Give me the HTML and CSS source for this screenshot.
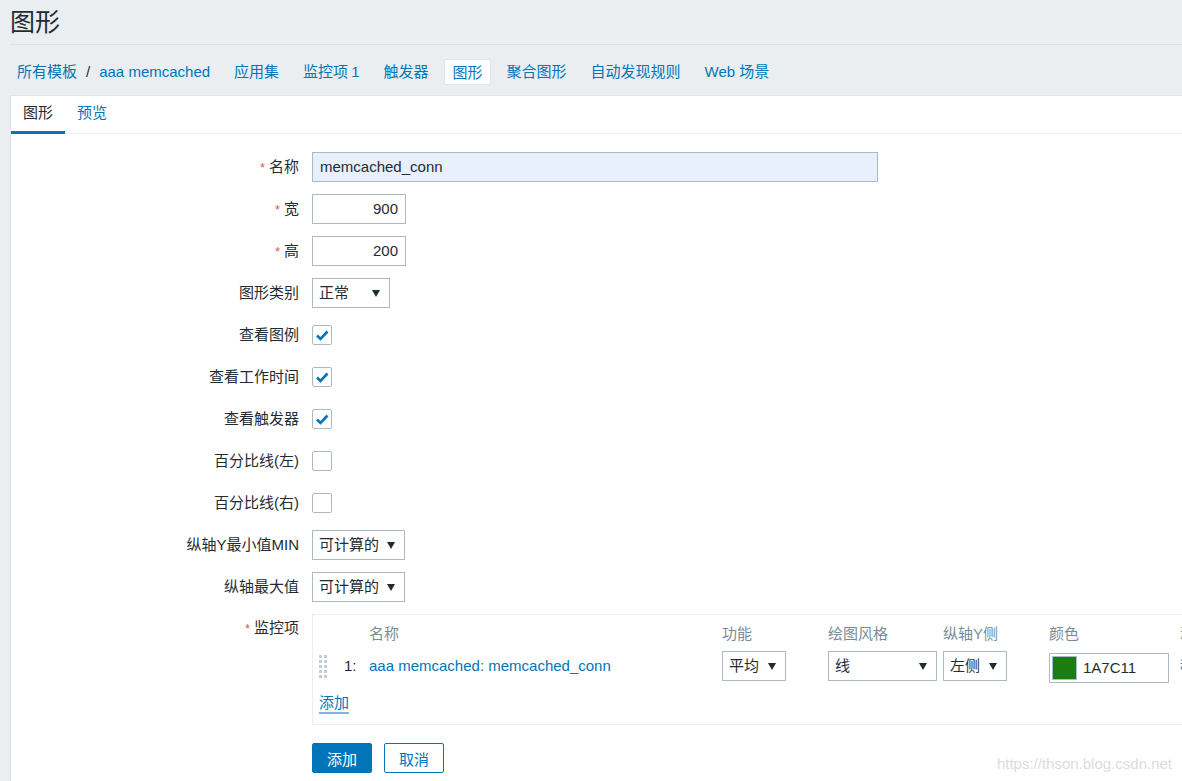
FILE: index.html
```html
<!DOCTYPE html>
<html lang="zh-CN">
<head>
<meta charset="utf-8">
<title>图形</title>
<link rel="stylesheet" href="styles.css">
</head>
<body>
<div class="page">
  <header class="header">
    <h1 class="title">图形</h1>
  </header>
  <nav class="nav">
    <a class="nav-link">所有模板</a>
    <span class="sep">/</span>
    <a class="nav-link">aaa memcached</a>
    <a class="nav-link gap">应用集</a>
    <a class="nav-link gap">监控项<span class="count">1</span></a>
    <a class="nav-link gap">触发器</a>
    <span class="nav-link gap selected">图形</span>
    <a class="nav-link gap">聚合图形</a>
    <a class="nav-link gap">自动发现规则</a>
    <a class="nav-link gap">Web 场景</a>
  </nav>
  <main class="panel">
    <div class="tabs">
      <span class="tab active">图形</span>
      <a class="tab">预览</a>
    </div>
    <div class="form">
      <label class="lbl"><span class="req">*</span>名称</label>
      <div class="field"><div class="input wide autofill">memcached_conn</div></div>

      <label class="lbl"><span class="req">*</span>宽</label>
      <div class="field"><div class="input num">900</div></div>

      <label class="lbl"><span class="req">*</span>高</label>
      <div class="field"><div class="input num">200</div></div>

      <label class="lbl">图形类别</label>
      <div class="field"><div class="select s-type">正常<i class="arrow"></i></div></div>

      <label class="lbl">查看图例</label>
      <div class="field"><span class="cb on"><svg viewBox="0 0 20 20" width="20" height="20"><path d="M5 10.5l3.5 3.5 7-7.5" fill="none" stroke="#0275b8" stroke-width="2.6"/></svg></span></div>

      <label class="lbl">查看工作时间</label>
      <div class="field"><span class="cb on"><svg viewBox="0 0 20 20" width="20" height="20"><path d="M5 10.5l3.5 3.5 7-7.5" fill="none" stroke="#0275b8" stroke-width="2.6"/></svg></span></div>

      <label class="lbl">查看触发器</label>
      <div class="field"><span class="cb on"><svg viewBox="0 0 20 20" width="20" height="20"><path d="M5 10.5l3.5 3.5 7-7.5" fill="none" stroke="#0275b8" stroke-width="2.6"/></svg></span></div>

      <label class="lbl">百分比线(左)</label>
      <div class="field"><span class="cb"></span></div>

      <label class="lbl">百分比线(右)</label>
      <div class="field"><span class="cb"></span></div>

      <label class="lbl">纵轴Y最小值MIN</label>
      <div class="field"><div class="select s-calc">可计算的<i class="arrow"></i></div></div>

      <label class="lbl">纵轴最大值</label>
      <div class="field"><div class="select s-calc">可计算的<i class="arrow"></i></div></div>

      <label class="lbl top"><span class="req">*</span>监控项</label>
      <div class="field">
        <div class="items">
          <div class="items-grid">
            <span></span><span></span>
            <span class="th">名称</span>
            <span class="th">功能</span>
            <span class="th">绘图风格</span>
            <span class="th">纵轴Y侧</span>
            <span class="th">颜色</span>
            <span class="th">动作</span>

            <span class="handle"><svg width="8" height="23" viewBox="0 0 8 23"><g fill="#c3ccd1"><rect x="0" y="0" width="3" height="3"/><rect x="5" y="0" width="3" height="3"/><rect x="0" y="5" width="3" height="3"/><rect x="5" y="5" width="3" height="3"/><rect x="0" y="10" width="3" height="3"/><rect x="5" y="10" width="3" height="3"/><rect x="0" y="15" width="3" height="3"/><rect x="5" y="15" width="3" height="3"/><rect x="0" y="20" width="3" height="3"/><rect x="5" y="20" width="3" height="3"/></g></svg></span>
            <span class="td">1:</span>
            <a class="td link">aaa memcached: memcached_conn</a>
            <span class="td"><div class="select s-func">平均<i class="arrow"></i></div></span>
            <span class="td"><div class="select s-style">线<i class="arrow"></i></div></span>
            <span class="td"><div class="select s-axis">左侧<i class="arrow"></i></div></span>
            <span class="td"><div class="input color"><span class="swatch"></span>1A7C11</div></span>
            <a class="td link remove">移除</a>
          </div>
          <a class="add-link">添加</a>
        </div>
      </div>

      <span></span>
      <div class="field buttons">
        <button class="btn primary">添加</button>
        <button class="btn">取消</button>
      </div>
    </div>
  </main>
  <div class="watermark">https://thson.blog.csdn.net</div>
</div>
</body>
</html>
```

FILE: styles.css
```css
* { box-sizing: border-box; }
html, body { margin: 0; padding: 0; }
body {
  background: #ebeef0;
  font-family: "Liberation Sans", "Noto Sans CJK SC", sans-serif;
  font-size: 15px;
  color: #1f2c33;
  overflow: hidden;
  width: 1182px;
  height: 781px;
}
.page {
  position: relative;
  width: 1182px;
  height: 781px;
  overflow: hidden;
}
.header {
  margin: 0 0 0 10px;
  height: 45px;
  border-bottom: 1px solid #dce2e5;
  display: flex;
  align-items: center;
}
.title {
  margin: 0;
  font-size: 25px;
  font-weight: normal;
  line-height: 30px;
  color: #1f2c33;
}
.nav {
  display: flex;
  align-items: center;
  height: 50px;
  padding-top: 3px;
  padding-left: 17px;
}
.nav-link {
  color: #0275b8;
  white-space: nowrap;
  line-height: 25px;
}
.count { margin-left: 3px; }
.nav-link.gap { margin-left: 24px; }
.sep { margin: 0 9px; color: #1f2c33; }
.nav-link.selected {
  background: #fff;
  border: 1px solid #e0e5e8;
  border-radius: 2px;
  padding: 0 7px;
  margin-left: 16px;
  margin-right: -8px;
  height: 26px;
}
.panel {
  margin-left: 10px;
  width: 1400px;
  height: 700px;
  background: #fff;
  border: 1px solid #dfe4e7;
  border-right: none;
}
.tabs {
  display: flex;
  height: 38px;
  border-bottom: 1px solid #ebeef0;
}
.tab {
  color: #0275b8;
  padding: 0 12px;
  line-height: 34px;
  height: 38px;
  border-bottom: 3px solid transparent;
}
.tab.active {
  color: #1f2c33;
  border-bottom-color: #0275b8;
}
.form {
  display: grid;
  grid-template-columns: 288px 1fr;
  column-gap: 13px;
  row-gap: 12px;
  padding-top: 18px;
}
.lbl {
  text-align: right;
  line-height: 30px;
  height: 30px;
  white-space: nowrap;
  overflow: visible;
}
.lbl.top { line-height: 28px; }
.req { color: #e45959; margin-right: 4px; font-size: 13px; line-height: 1; }
.field {
  display: flex;
  align-items: center;
  min-height: 30px;
}
.input {
  height: 30px;
  border: 1px solid #acbbc2;
  background: #fff;
  line-height: 28px;
  padding: 0 7px;
  white-space: nowrap;
}
.input.wide { width: 566px; }
.input.autofill { background: #e8f0fe; }
.input.num { width: 94px; text-align: right; }
.select {
  position: relative;
  height: 30px;
  border: 1px solid #acbbc2;
  background: #fff;
  line-height: 28px;
  padding: 0 6px;
  white-space: nowrap;
}
.arrow {
  position: absolute;
  right: 9px;
  top: 11px;
  width: 0;
  height: 0;
  border-left: 4px solid transparent;
  border-right: 4px solid transparent;
  border-top: 7px solid #1f2c33;
}
.s-type { width: 78px; }
.s-calc { width: 93px; }
.s-func { width: 64px; }
.s-style { width: 109px; }
.s-axis { width: 64px; }
.cb {
  display: inline-block;
  width: 20px;
  height: 20px;
  border: 1px solid #acbbc2;
  border-radius: 2px;
  background: #fff;
  position: relative;
}
.cb svg { position: absolute; left: -1px; top: -1px; }
.items {
  width: 1000px;
  height: 111px;
  border: 1px solid #ebeef0;
  border-right: none;
  padding: 5px 0 0 6px;
}
.items-grid {
  display: grid;
  grid-template-columns: 25px 25px 353px 106px 115px 106px 131px 80px;
  grid-template-rows: 28px 36px;
  align-items: center;
}
.items-grid .th { align-self: start; padding-top: 4px; }
.th { color: #768d99; white-space: nowrap; line-height: 20px; }
.td { white-space: nowrap; line-height: 20px; }
.handle { display: flex; align-items: center; height: 30px; }
.link { color: #0275b8; }
.remove { color: #0275b8; }
.input.color {
  width: 120px;
  display: flex;
  align-items: center;
  padding-left: 2px;
  margin-top: 3px;
}
.swatch {
  display: inline-block;
  width: 25px;
  height: 24px;
  background: #1a7c11;
  border: 1px solid #acbbc2;
  margin-right: 6px;
}
.add-link {
  display: inline-block;
  margin-top: 10px;
  color: #0275b8;
  line-height: 18px;
  border-bottom: 2px solid #7fb8dd;
}
.buttons { gap: 12px; margin-top: 6px; }
.btn {
  height: 30px;
  width: 60px;
  font: inherit;
  border: 1px solid #0275b8;
  border-radius: 2px;
  background: #fff;
  color: #0275b8;
  padding: 0;
}
.btn.primary { background: #0275b8; color: #fff; }
.watermark {
  position: absolute;
  right: 10px;
  bottom: 9px;
  color: #dcdcdc;
  font-size: 15px;
}
```
